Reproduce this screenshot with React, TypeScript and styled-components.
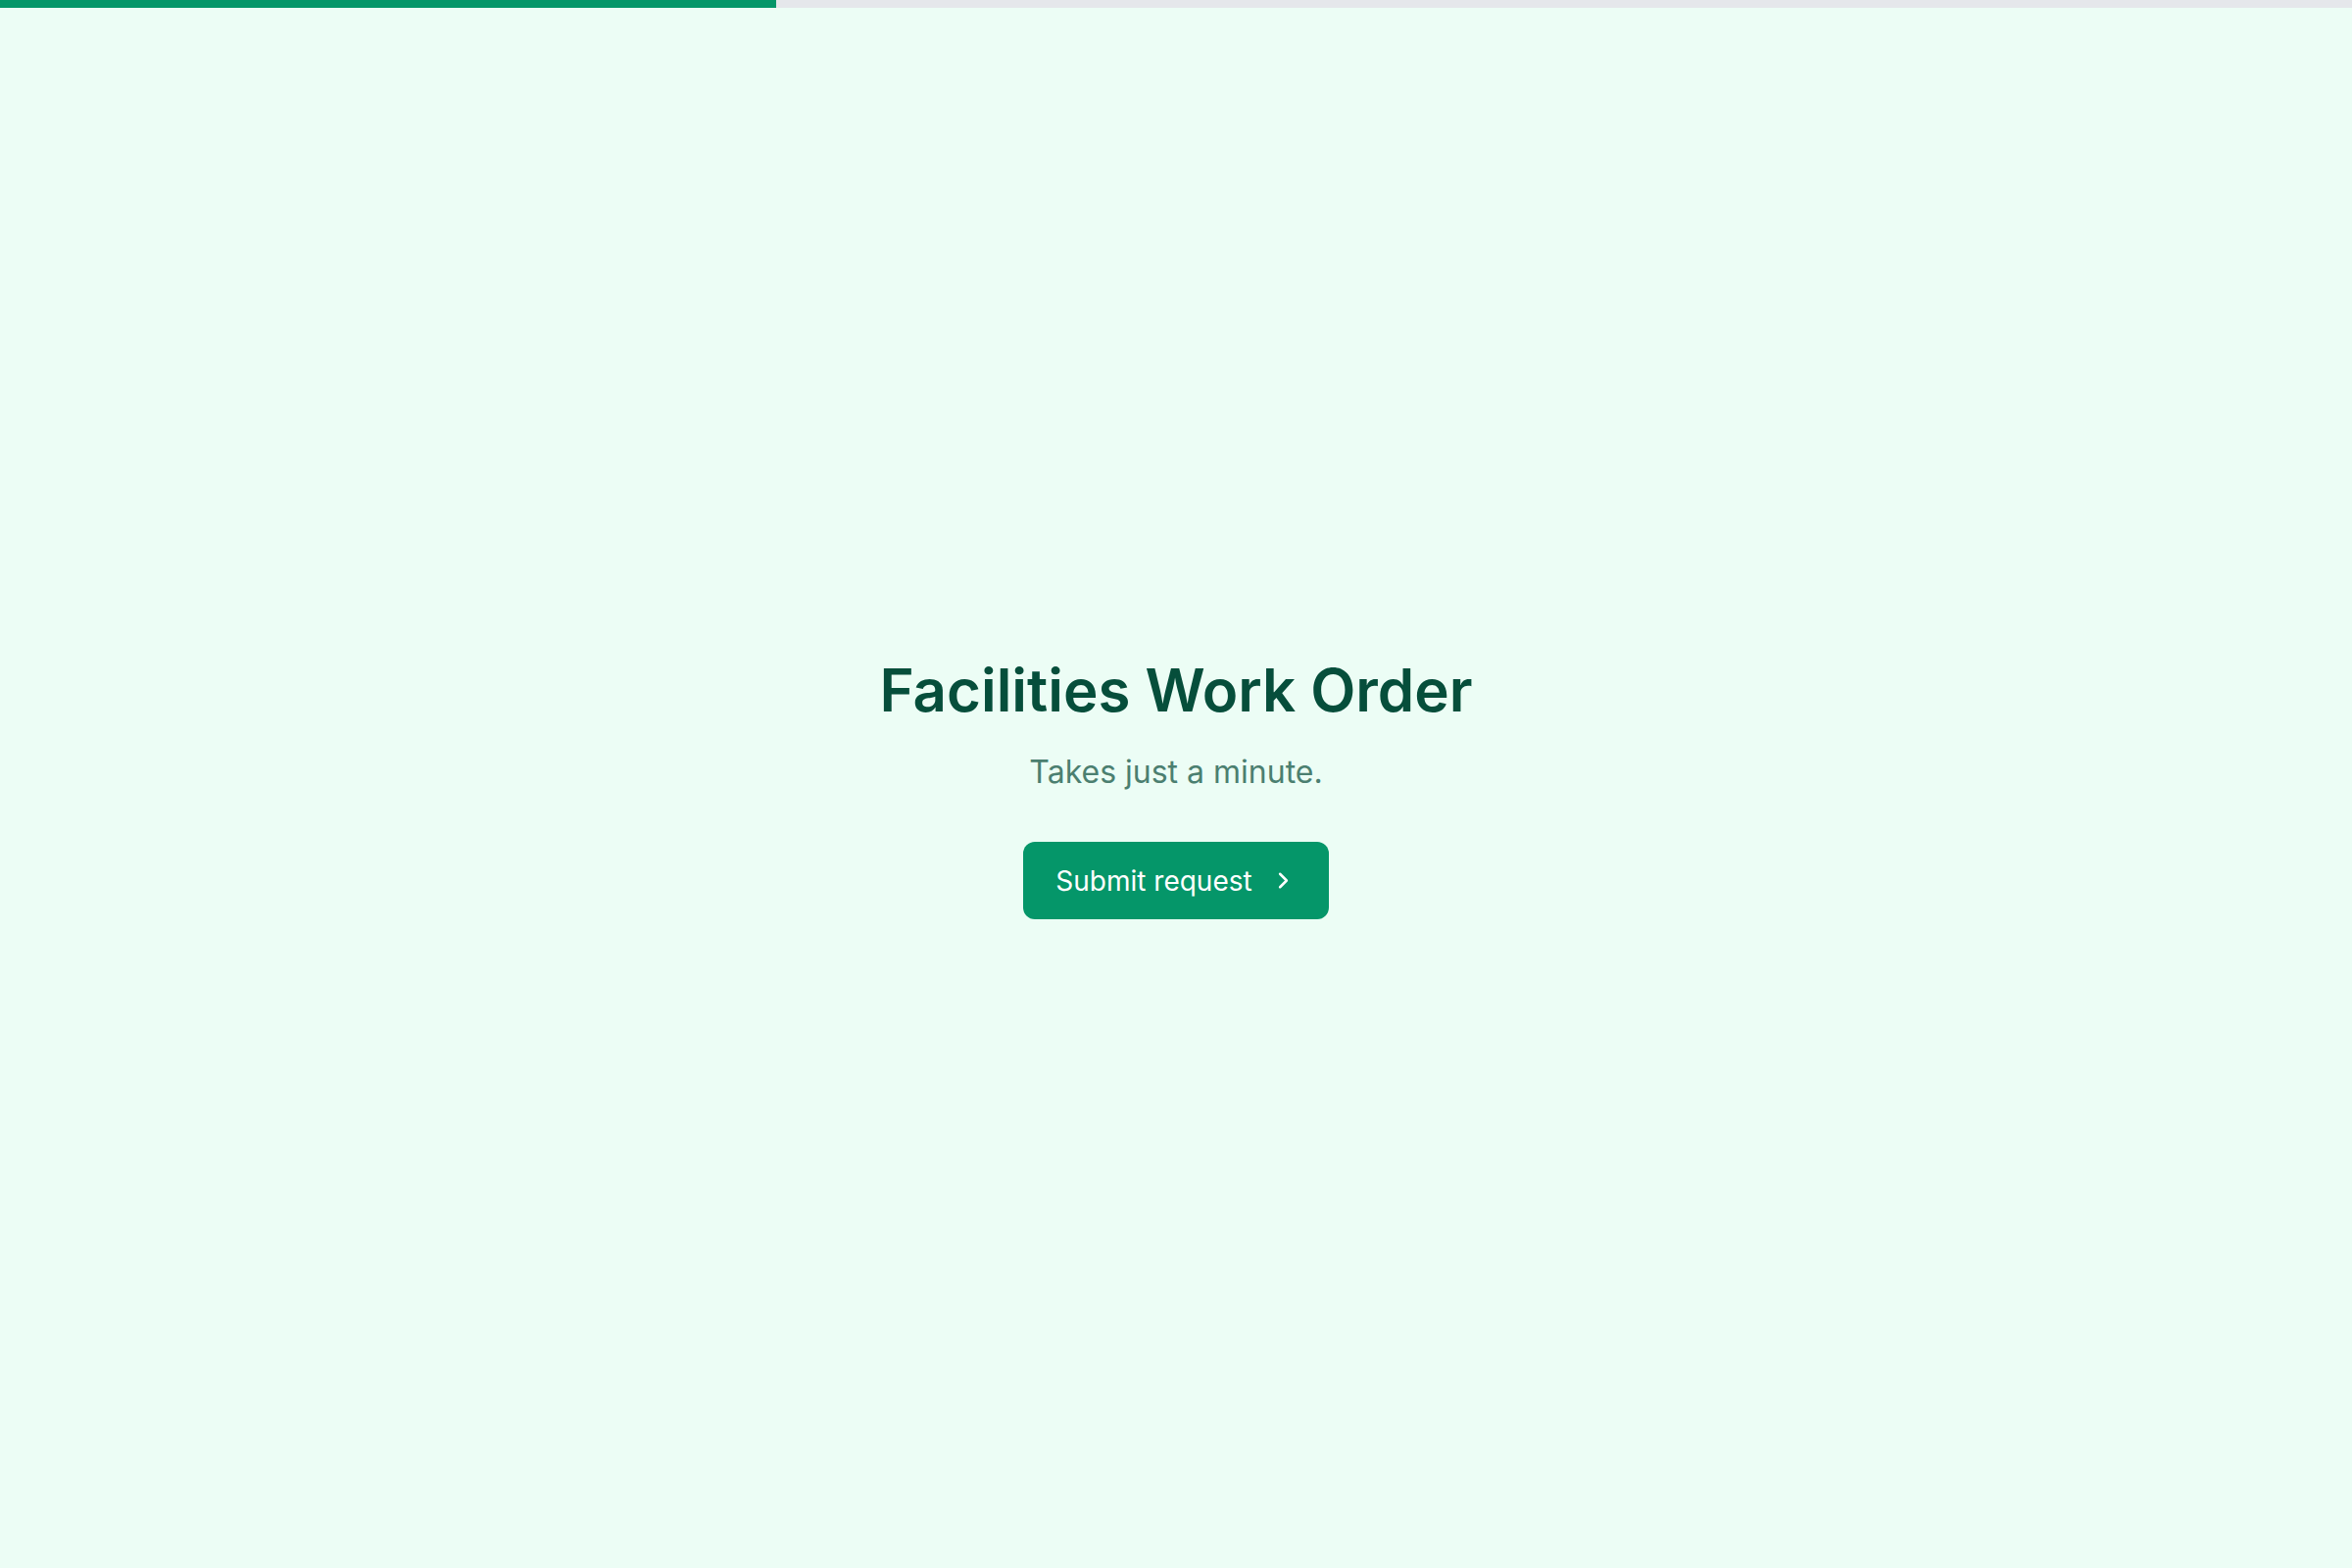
import React from 'react';
import styled, { createGlobalStyle } from 'styled-components';
import { ChevronRight } from 'lucide-react';

const GlobalStyle = createGlobalStyle`
    html, body {
        margin: 0;
        padding: 0;
        background-color: #ecfdf5;
        font-family: Inter, "Noto Sans", sans-serif;
    }
    * {
        box-sizing: border-box;
    }
`;

const Page = styled.div`
    min-height: 100vh;
    display: flex;
    flex-direction: column;
    background-color: #ecfdf5;
`;

const ProgressTrack = styled.div`
    height: 8px;
    width: 100%;
    background-color: #e5e7eb;
    flex-shrink: 0;
`;

const ProgressFill = styled.div<{ $value: number }>`
    height: 100%;
    width: ${(p) => p.$value}%;
    background-color: #059669;
`;

const Main = styled.main`
    flex: 1;
    display: flex;
    flex-direction: column;
    align-items: center;
    justify-content: center;
    text-align: center;
    padding-top: 4px;
`;

const Title = styled.h1`
    margin: 0;
    font-size: 60px;
    line-height: 60px;
    font-weight: 600;
    letter-spacing: 0;
    color: #064e3b;
`;

const Subtitle = styled.p`
    margin: 32px 0 0;
    font-size: 32px;
    line-height: 44px;
    font-weight: 400;
    color: #4b7f70;
`;

const PrimaryButton = styled.button`
    margin-top: 49px;
    height: 79px;
    display: inline-flex;
    align-items: center;
    gap: 18px;
    padding: 0 33px;
    border: none;
    border-radius: 12px;
    background-color: #059669;
    color: #ffffff;
    font-family: Inter, "Noto Sans", sans-serif;
    font-size: 28px;
    font-weight: 400;
    cursor: pointer;
`;

const App = (): JSX.Element => {
    return (
        <>
            <GlobalStyle />
            <Page>
                <ProgressTrack>
                    <ProgressFill $value={33} />
                </ProgressTrack>
                <Main>
                    <Title>Facilities Work Order</Title>
                    <Subtitle>Takes just a minute.</Subtitle>
                    <PrimaryButton>
                        Submit request
                        <ChevronRight size={27} strokeWidth={2.2} />
                    </PrimaryButton>
                </Main>
            </Page>
        </>
    );
};

export default App;
